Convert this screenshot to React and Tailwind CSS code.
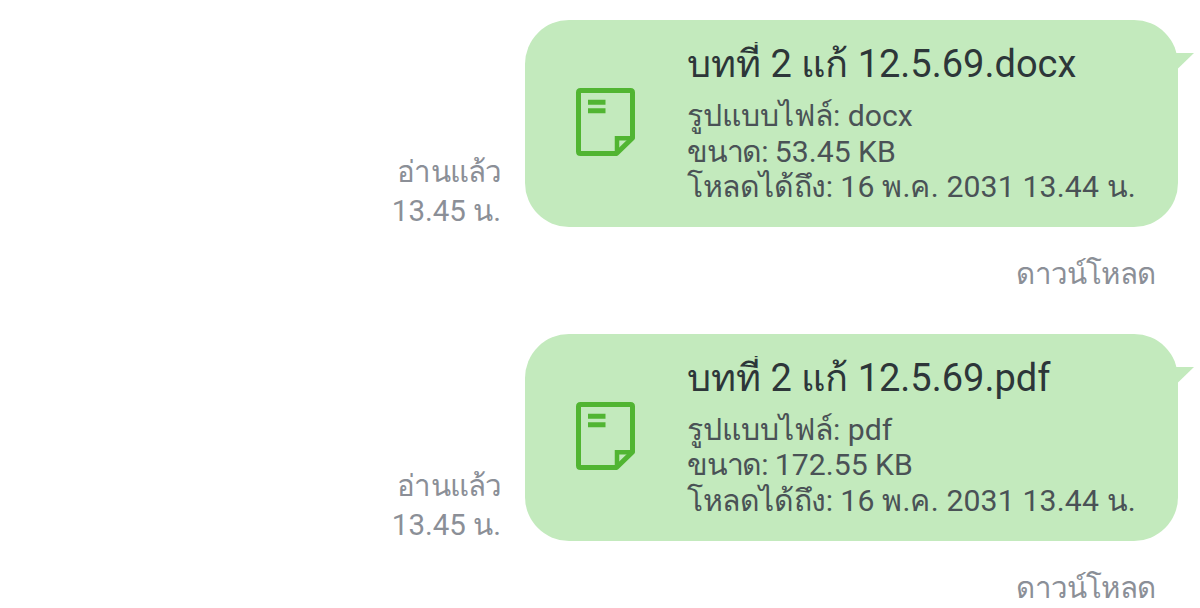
import React from 'react';

const files = [
  {
    name: 'บทที่ 2 แก้ 12.5.69.docx',
    type: 'docx',
    size: '53.45 KB',
    expires: '16 พ.ค. 2031 13.44 น.',
    time: '13.45 น.',
  },
  {
    name: 'บทที่ 2 แก้ 12.5.69.pdf',
    type: 'pdf',
    size: '172.55 KB',
    expires: '16 พ.ค. 2031 13.44 น.',
    time: '13.45 น.',
  },
];

function FileIcon() {
  return (
    <svg width="60" height="69" viewBox="0 0 60 69" fill="none" stroke="#51b532" strokeWidth="5" className="shrink-0">
      <path d="M4.500 2.500H54.500Q56.500 2.500 56.500 4.500V50L40.500 65.500H4.500Q2.500 65.500 2.500 63.500V4.500Q2.500 2.500 4.500 2.500Z" strokeLinejoin="round" />
      <path d="M41 65V50.200H56.500" strokeWidth="4.500" />
      <path d="M12 14.200H29.500M12 22.700H29.500" />
    </svg>
  );
}

function FileMessage({ file }) {
  return (
    <div>
      <div className="flex items-end justify-end">
        {/* Read status */}
        <div className="mr-6 -mb-1 text-right text-[29.5px] leading-[39px] text-[#8b8f97]">
          <p className="tracking-[-0.9px]">อ่านแล้ว</p>
          <p>{file.time}</p>
        </div>

        {/* Bubble */}
        <div className="relative flex h-[207px] w-[653px] rounded-[44px] bg-[#c3eabd] pl-[51px]">
          <svg width="20" height="16" viewBox="0 0 20 16" className="absolute top-[33px] -right-4">
            <path d="M0 0H20L4 15.500H0Z" fill="#c3eabd" />
          </svg>
          <div className="pt-[68px]">
            <FileIcon />
          </div>
          <div className="ml-[51px] pt-[22px] whitespace-nowrap">
            {/* tall tone marks are cut at the top of the title line */}
            <h2 className="h-[56px] overflow-hidden text-[38px] leading-[45px] text-[#2d3639]">{file.name}</h2>
            <div className="text-[30.2px] leading-[35.5px] text-[#4a5256]">
              <p>รูปแบบไฟล์: {file.type}</p>
              <p>
                <span className="tracking-[-1.2px]">ขนาด:</span> {file.size}
              </p>
              <p className="tracking-[0.15px]">
                <span className="tracking-[-0.4px]">โหลดได้ถึง:</span> {file.expires}
              </p>
            </div>
          </div>
        </div>
      </div>

      <p className="mt-[27px] mr-[23px] text-right text-[29.5px] leading-[40px] tracking-[-0.8px] text-[#8b8f97]">ดาวน์โหลด</p>
    </div>
  );
}

export default function App() {
  return (
    <div className="flex h-[608px] w-[1200px] flex-col gap-[39.5px] overflow-hidden bg-white pt-5 pr-[22px] font-[Roboto,'Noto_Sans',sans-serif]">
      {files.map((file) => (
        <FileMessage key={file.type} file={file} />
      ))}
    </div>
  );
}
